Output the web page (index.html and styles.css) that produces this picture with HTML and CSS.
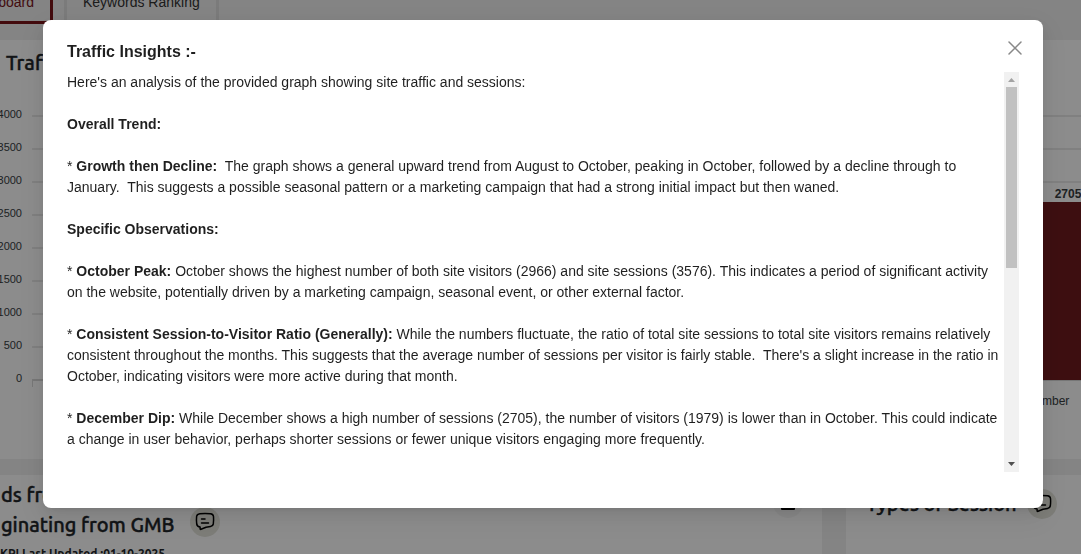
FILE: index.html
```html
<!DOCTYPE html>
<html lang="en">
<head>
<meta charset="utf-8">
<title>Traffic Insights</title>
<link rel="stylesheet" href="styles.css">
</head>
<body>
<svg width="0" height="0" class="defs" aria-hidden="true">
  <symbol id="chat" viewBox="0 0 20 20">
    <path d="M4.800 1.700C8 1.300 12 1.300 15.500 1.700Q18.200 2 18.500 4.500Q18.800 8.500 18.300 12Q17.900 14.200 15.500 14.500L11 15.200L6 17.300Q5 17.700 5.100 16.500V15Q2.200 14.700 1.700 12Q1.200 8.500 1.600 4.500Q2 2.100 4.800 1.700ZM6.500 7H10M6.500 11H13.500" fill="none" stroke="currentColor" stroke-width="1.500" stroke-linecap="round" stroke-linejoin="round"/>
  </symbol>
  <symbol id="note" viewBox="0 0 20 20">
    <path d="M4 3H16V16H4Z" fill="none" stroke="currentColor" stroke-width="2" stroke-linejoin="round"/>
  </symbol>
</svg>
<div class="page">
  <nav class="tabs">
    <a class="tab tab-active" href="#">Dashboard</a>
    <a class="tab" href="#">Keywords Ranking</a>
  </nav>
  <section class="card chart-card">
    <h2 class="heading">Traffic</h2>
    <div class="chart">
      <div class="axis"><span>4000</span><span>3500</span><span>3000</span><span>2500</span><span>2000</span><span>1500</span><span>1000</span><span>500</span><span>0</span></div>
      <div class="lines"><i></i><i></i><i></i><i></i><i></i><i></i><i></i><i></i><i class="base"></i></div>
      <div class="series"><span class="value">2705</span><div class="bar"></div><span class="month">December</span></div>
    </div>
  </section>
  <div class="columns">
    <section class="card leads">
      <div class="leads-title">
        <h2 class="heading">ds from<br>ginating from GMB</h2>
        <button class="round" aria-label="Lead insights"><svg><use href="#chat"/></svg></button>
      </div>
      <button class="round faint" aria-label="Comments"><svg><use href="#note"/></svg></button>
      <p class="updated">KPI Last Updated :01-10-2025</p>
    </section>
    <section class="card sessions">
      <h2 class="heading">Types of Session</h2>
      <button class="round" aria-label="Session insights"><svg><use href="#chat"/></svg></button>
    </section>
  </div>
</div>
<div class="mask">
  <div class="modal" role="dialog" aria-modal="true" aria-labelledby="title">
    <header class="modal-head">
      <h1 class="title" id="title">Traffic Insights :-</h1>
      <button class="close" aria-label="Close"><svg viewBox="0 0 14 14"><path d="M1 1L13 13M13 1L1 13"/></svg></button>
    </header>
    <div class="modal-body">
      <div class="text" tabindex="0">Here's an analysis of the provided graph showing site traffic and sessions:

<b>Overall Trend:</b>

* <b>Growth then Decline:</b>  The graph shows a general upward trend from August to October, peaking in October, followed by a decline through to January.  This suggests a possible seasonal pattern or a marketing campaign that had a strong initial impact but then waned.

<b>Specific Observations:</b>

* <b>October Peak:</b> October shows the highest number of both site visitors (2966) and site sessions (3576). This indicates a period of significant activity on the website, potentially driven by a marketing campaign, seasonal event, or other external factor.

* <b>Consistent Session-to-Visitor Ratio (Generally):</b> While the numbers fluctuate, the ratio of total site sessions to total site visitors remains relatively consistent throughout the months. This suggests that the average number of sessions per visitor is fairly stable.  There's a slight increase in the ratio in October, indicating visitors were more active during that month.

* <b>December Dip:</b> While December shows a high number of sessions (2705), the number of visitors (1979) is lower than in October. This could indicate a change in user behavior, perhaps shorter sessions or fewer unique visitors engaging more frequently.</div>
      <div class="scrollbar" aria-hidden="true">
        <svg class="arrow up" viewBox="0 0 15 15"><path d="M4 10L7.500 6L11 10Z"/></svg>
        <div class="thumb"></div>
        <svg class="arrow down" viewBox="0 0 15 15"><path d="M4 5L7.500 9L11 5Z"/></svg>
      </div>
    </div>
  </div>
</div>
</body>
</html>
```
FILE: styles.css
```css
* { box-sizing: border-box; }
body { margin: 0; height: 100vh; overflow: hidden; background: #f0f0f0; color: #212529; font-family: "Liberation Sans", Arial, sans-serif; }
.defs { position: absolute; }
.page { height: 100vh; overflow: hidden; }
.tabs { display: flex; gap: 11px; height: 24px; margin-bottom: 16px; }
.tab { display: flex; border: 3px solid #e0e0e0; border-width: 0 3px; padding: 0 16px; font-size: 14px; line-height: 5px; color: #333; text-decoration: none; white-space: nowrap; }
.tab-active { width: 53px; justify-content: flex-end; border: solid #7a1418; border-width: 0 3px 3px 0; color: #7a1418; }
.card { background: #fff; }
.heading { margin: 0; font: 500 20px/30px Ubuntu, "Noto Sans", sans-serif; color: #212529; white-space: nowrap; -webkit-text-stroke: 0.4px currentColor; }
.chart-card { height: 419px; padding-top: 8px; overflow: hidden; }
.chart-card .heading { padding-left: 6px; }
.chart { display: grid; grid-template-columns: 22px 1fr 108px; column-gap: 10px; margin-right: -41px; padding-top: 37px; }
.axis { grid-area: 1 / 1; display: flex; flex-direction: column; align-items: flex-end; margin-top: -17px; font-size: 11px; line-height: 33px; color: #373d3f; }
.lines { grid-area: 1 / 2 / 2 / 4; }
.lines i { display: block; height: 33px; border-top: 2px solid #e9e9e9; }
.lines .base { height: 8px; border-left: 1px solid #d8d8d8; border-top-color: #d8d8d8; }
.series { grid-area: 1 / 3; display: flex; flex-direction: column; align-items: center; padding-top: 71px; font-size: 12px; line-height: 16px; color: #373d3f; }
.value { font-weight: 700; }
.bar { align-self: stretch; height: 178px; background: #701b1e; }
.month { align-self: flex-start; padding-top: 13px; }
.columns { display: grid; grid-template-columns: 822px 1fr; gap: 24px; padding-top: 16px; }
.leads { display: grid; grid-template-columns: 1fr auto; align-content: start; padding: 5px 19px 0 0; height: 100px; }
.leads-title { display: flex; align-items: flex-end; gap: 16px; }
.leads-title .heading { padding-left: 1px; }
.leads-title .round { margin-bottom: 3px; }
.updated { margin: 6px 0 0; font: 700 12px/16px Ubuntu, "Noto Sans", sans-serif; white-space: nowrap; }
.sessions { display: flex; gap: 10px; padding: 14px 0 0 20px; }
.round { flex: none; display: flex; align-items: center; justify-content: center; width: 30px; height: 30px; padding: 0; border: 0; border-radius: 50%; background: #e3e3da; color: #000; }
.round svg { width: 20px; height: 20px; }
.faint { margin-top: 8px; background: #f6f6f6; }
.mask { position: fixed; inset: 0; padding: 20px 38px 0 43px; background: rgba(0, 0, 0, .45); }
.modal { padding: 20px 24px 36px; border-radius: 8px; background: #fff; color: rgba(0, 0, 0, .88); box-shadow: 0 6px 16px rgba(0, 0, 0, .08), 0 3px 6px -4px rgba(0, 0, 0, .12), 0 9px 28px 8px rgba(0, 0, 0, .05); }
.modal-head { display: flex; justify-content: space-between; margin-bottom: 8px; }
.title { margin: 0; font-size: 16px; line-height: 24px; }
.close { display: flex; align-items: center; justify-content: center; width: 22px; height: 16px; margin-right: -7px; padding: 0; border: 0; background: none; }
.close svg { width: 14px; height: 14px; stroke: #888; stroke-width: 1.500; fill: none; stroke-linecap: round; }
.modal-body { display: flex; height: 400px; }
.text { flex: 1; overflow-y: auto; scrollbar-width: none; white-space: pre-wrap; font-size: 14px; line-height: 21px; }
.scrollbar { display: flex; flex-direction: column; width: 15px; background: #f1f1f1; }
.thumb { height: 181px; margin: 0 2px; background: #c1c1c1; }
.arrow { width: 15px; height: 15px; }
.up { fill: #a3a3a3; }
.down { margin-top: auto; fill: #505050; }
```
